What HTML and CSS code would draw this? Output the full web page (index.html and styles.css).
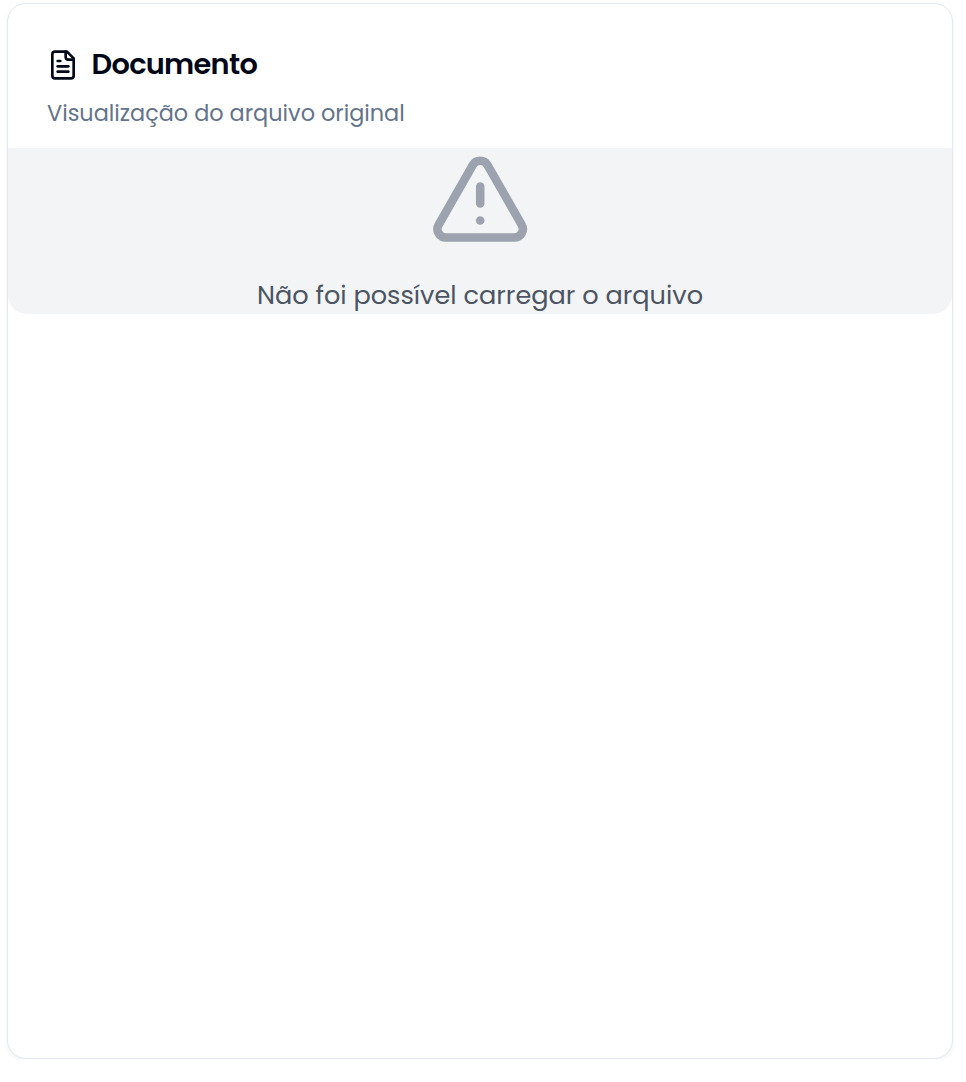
FILE: index.html
```html
<!DOCTYPE html>
<html lang="pt-BR">
<head>
<meta charset="utf-8">
<title>Documento</title>
<link rel="stylesheet" href="styles.css">
</head>
<body>
<main class="card">
  <header class="card-header">
    <h1 class="card-title">
      <svg class="title-icon" viewBox="0 0 24 24" aria-hidden="true">
        <path d="M15 2H6a2 2 0 0 0-2 2v16a2 2 0 0 0 2 2h12a2 2 0 0 0 2-2V7Z"/>
        <path d="M14 2v4a2 2 0 0 0 2 2h4"/>
        <path d="M10 9H8"/>
        <path d="M16 13H8"/>
        <path d="M16 17H8"/>
      </svg>
      <span class="title-text">Documento</span>
    </h1>
    <p class="card-description">Visualização do arquivo original</p>
  </header>
  <section class="viewer">
    <svg class="alert-icon" viewBox="0 0 24 24" aria-hidden="true">
      <path d="m21.73 18-8-14a2 2 0 0 0-3.48 0l-8 14A2 2 0 0 0 4 21h16a2 2 0 0 0 1.73-3"/>
      <path d="M12 9v4"/>
      <path d="M12 17h.01"/>
    </svg>
    <p class="viewer-message">Não foi possível carregar o arquivo</p>
  </section>
</main>
</body>
</html>
```
FILE: styles.css
```css
* {
  box-sizing: border-box;
}

body {
  margin: 0;
  padding: 3px 13px 0 7px;
  background: #fff;
  font-family: Poppins, Inter, "Open Sans", sans-serif;
}

.card {
  height: 1056px;
  border: 1px solid #e2e8f0;
  border-radius: 19px;
  background: #fff;
  box-shadow: 0 2px 4px rgba(0, 0, 0, 0.05);
}

.card-header {
  height: 144px;
  padding: 45px 39px 0;
}

.card-title {
  display: flex;
  align-items: center;
  gap: 12.6px;
  height: 32px;
  margin: 0;
  color: #020817;
  font-size: 28.8px;
  font-weight: 600;
  line-height: 30px;
  letter-spacing: -0.72px;
}

.title-text {
  padding-bottom: 2px;
}

.title-icon {
  width: 32px;
  height: 32px;
}

.title-icon,
.alert-icon {
  flex: none;
  fill: none;
  stroke: currentColor;
  stroke-width: 2;
  stroke-linecap: round;
  stroke-linejoin: round;
}

.card-description {
  margin: 16px 0 0;
  color: #64748b;
  font-size: 22.4px;
  line-height: 32px;
}

.viewer {
  display: flex;
  flex-direction: column;
  align-items: center;
  height: 166px;
  border-radius: 0 0 19px 19px;
  background: #f3f4f6;
}

.alert-icon {
  width: 102.4px;
  height: 102.4px;
  color: #9ca3af;
}

.viewer-message {
  margin: 25.6px 0 0;
  color: #4b5563;
  font-size: 25.6px;
  line-height: 38px;
  white-space: nowrap;
}
```
